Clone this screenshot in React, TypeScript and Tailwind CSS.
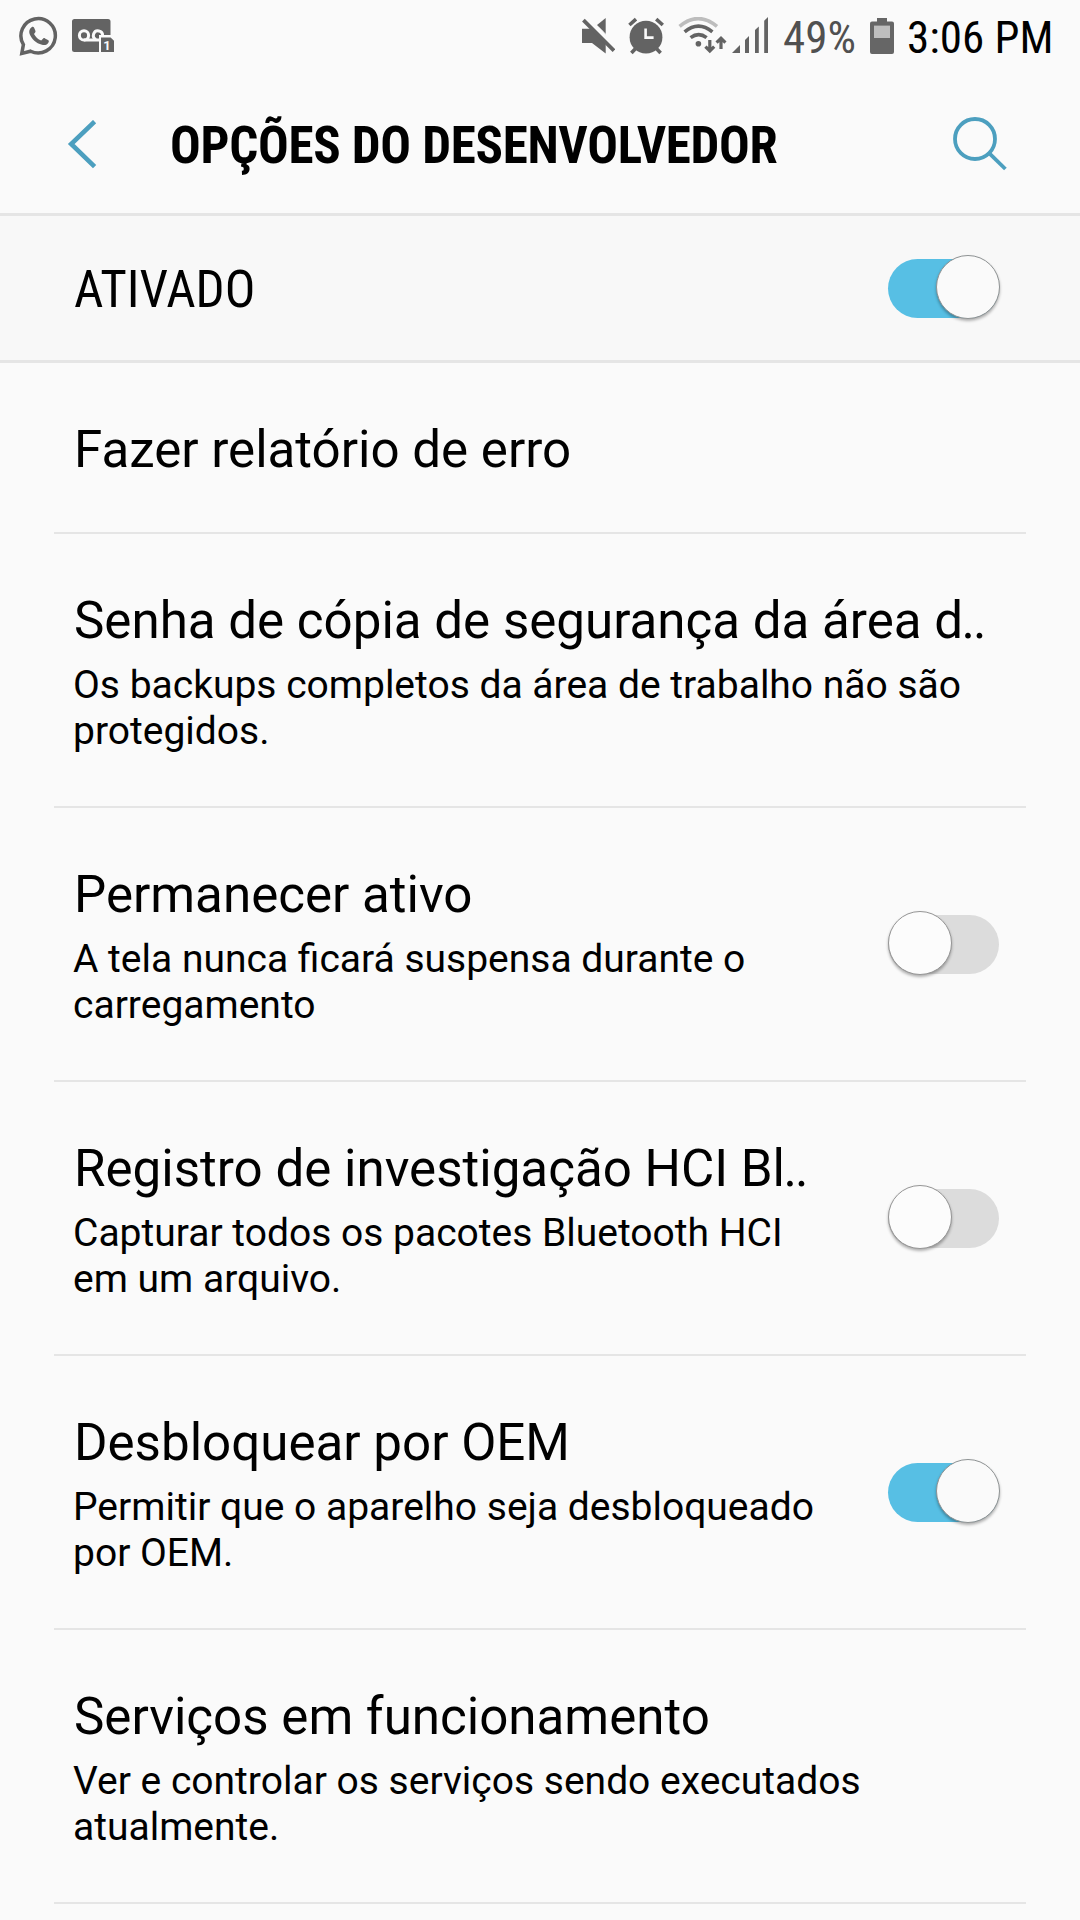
import React from "react";

function WhatsAppIcon() {
  return (
    <svg width="40" height="40" viewBox="19 16 40 40" fill="none">
      <path d="M23.4 44.6 A17.2 17.2 0 1 1 30.6 51.2 L21.8 53.4 Z" stroke="#636363" strokeWidth="3.5" strokeLinejoin="miter" />
      <path
        d="M31.6 27.2 C32.6 26.4 33.6 26.6 34 27.6 L35.4 30.8 C35.8 31.8 35.2 32.6 34 34 C35.6 37 38 39.2 41.2 40.6 L43.2 38.6 C43.8 38 44.4 38 45 38.4 L48 40 C49 40.6 49 41.2 48.6 42.2 C47.6 44.8 44.6 45.4 42 44.8 C36 43.2 31.6 39 29.6 34 C28.6 31.2 29.6 28.6 31.6 27.2 Z"
        fill="#636363"
      />
    </svg>
  );
}

function VoicemailIcon() {
  return (
    <svg width="44" height="36" viewBox="71 18 44 36" fill="none">
      <path d="M74.5 19 H108 Q110.5 19 110.5 21.5 V35 H99 V52 H74.5 Q72 52 72 49.5 V21.5 Q72 19 74.5 19 Z" fill="#636363" />
      <g stroke="#fafafa" strokeWidth="3">
        <circle cx="84" cy="35.4" r="4.6" />
        <path d="M96 39.6 A4.6 4.6 0 1 1 102.6 35.6" />
        <path d="M84 40 H99.4" />
      </g>
      <path d="M101 37.4 H110.6 L114 40.8 V52 H101 Z" fill="#636363" />
      <text x="107" y="49.6" textAnchor="middle" fontSize="13" fontWeight="700" fill="#fafafa" fontFamily="Roboto, sans-serif">1</text>
    </svg>
  );
}

function MuteIcon() {
  return (
    <svg width="34" height="38" viewBox="581 17 34 38">
      <path d="M582 28.8 H592 L605.7 18 V53.6 L592 43 H582 Z" fill="#636363" />
      <path d="M586 17.4 L616 48.4" stroke="#fafafa" strokeWidth="5" />
      <path d="M592 17 L606 17 L606 34 L594 24 Z" fill="#fafafa" />
      <path d="M605.7 18 V33.4 L597 25 Z" fill="#636363" />
      <path d="M583.4 20.2 L614 50.6" stroke="#636363" strokeWidth="3.8" />
    </svg>
  );
}

function AlarmIcon() {
  return (
    <svg width="36" height="38" viewBox="628 17 36 38" fill="none">
      <circle cx="646" cy="37.2" r="16.4" fill="#636363" />
      <g stroke="#636363" strokeWidth="3.6">
        <path d="M629.4 25 L636 19.2 M662.8 25 L656.2 19.2" />
        <path d="M631.4 53 L637 47 M660.6 53 L655 47" />
      </g>
      <path d="M645.6 28.6 V37.6 H653.6" stroke="#fafafa" strokeWidth="2.6" />
    </svg>
  );
}

function WifiIcon() {
  return (
    <svg width="49" height="38" viewBox="678 17 49 38" fill="none">
      <path d="M679.6 26.4 Q698 10.8 717 26.4" stroke="#bdbdbd" strokeWidth="3.6" />
      <path d="M684.6 31.8 Q698.4 20.6 712.4 31.8" stroke="#636363" strokeWidth="3.6" />
      <path d="M690.6 37.6 Q698.6 31.6 706.6 37.6" stroke="#636363" strokeWidth="3.6" />
      <circle cx="698.4" cy="43.8" r="2.8" fill="#636363" />
      <g stroke="#636363" strokeWidth="3.2">
        <path d="M709.8 40 V50.4 M705.4 46.6 L709.8 51 L714.2 46.6" />
        <path d="M721 49 V38.6 M716.6 42.6 L721 38.2 L725.4 42.6" />
      </g>
    </svg>
  );
}

function SignalIcon() {
  return (
    <svg width="37" height="37" viewBox="732 17 37 37" fill="#636363">
      <path d="M732 53 L740 45 V53 Z" />
      <path d="M745 53 V40 L749 36 V53 Z" />
      <path d="M755 53 V30 L758.8 26.4 V53 Z" />
      <path d="M764.2 53 V20.8 L768 17 V53 Z" />
    </svg>
  );
}

function BatteryIcon() {
  return (
    <svg width="24" height="36" viewBox="870 18 24 36">
      <path d="M877 18 H887 V21.6 H892 Q894 21.6 894 23.6 V52 Q894 54 892 54 H872 Q870 54 870 52 V23.6 Q870 21.6 872 21.6 H877 Z" fill="#666" />
      <path d="M874 25.6 H890 V38 H874 Z" fill="#bebebe" />
    </svg>
  );
}

function StatusBar() {
  return (
    <div className="flex h-[72px] items-start">
      <div className="ml-[19px] mt-4"><WhatsAppIcon /></div>
      <div className="ml-3 mt-[18px]"><VoicemailIcon /></div>
      <div className="ml-[466px] mt-[17px]"><MuteIcon /></div>
      <div className="ml-[13px] mt-[17px]"><AlarmIcon /></div>
      <div className="ml-[14px] mt-[17px]"><WifiIcon /></div>
      <div className="ml-[5px] mt-[17px]"><SignalIcon /></div>
      <div className="ml-[14px] mt-[11px] w-[87px] whitespace-nowrap text-[45px] leading-[53px] text-[#505050] [font-stretch:75%]">49%</div>
      <div className="mt-[18px]"><BatteryIcon /></div>
      <div className="ml-[13px] mt-[11px] whitespace-nowrap text-[45px] leading-[53px] [font-stretch:75%]">3:06 PM</div>
    </div>
  );
}

function Toggle({ on = false }: { on?: boolean }) {
  return (
    <div className={on ? "relative h-[59px] w-[111px] rounded-full bg-[#57bfe4]" : "relative h-[59px] w-[111px] rounded-full bg-[#dcdcdc]"}>
      <div
        className={
          on
            ? "absolute -top-1 left-[48px] size-[64px] rounded-full border border-[#8f9394] bg-[#fafafa] shadow-[0_2px_3px_rgba(0,0,0,0.3)]"
            : "absolute -top-1 left-0 size-[64px] rounded-full border border-[#969696] bg-[#fcfcfc] shadow-[0_2px_3px_rgba(0,0,0,0.3)]"
        }
      />
    </div>
  );
}

interface Setting {
  title: string;
  truncated?: boolean;
  lines?: string[];
  on?: boolean;
}

const settings: Setting[] = [
  { title: "Fazer relatório de erro" },
  { title: "Senha de cópia de segurança da área d", truncated: true, lines: ["Os backups completos da área de trabalho não são", "protegidos."] },
  { title: "Permanecer ativo", lines: ["A tela nunca ficará suspensa durante o", "carregamento"], on: false },
  { title: "Registro de investigação HCI Bl", truncated: true, lines: ["Capturar todos os pacotes Bluetooth HCI", "em um arquivo."], on: false },
  { title: "Desbloquear por OEM", lines: ["Permitir que o aparelho seja desbloqueado", "por OEM."], on: true },
  { title: "Serviços em funcionamento", lines: ["Ver e controlar os serviços sendo executados", "atualmente."] },
];

function SettingRow({ title, truncated, lines, on }: Setting) {
  return (
    <div className={lines ? "mx-[54px] flex h-[274px] border-b-2 border-[#e5e5e5]" : "mx-[54px] flex h-[171px] border-b-2 border-[#e5e5e5]"}>
      <div className="flex-1 whitespace-nowrap pl-5 pt-14">
        <div className="text-[51.1px] leading-[61px]">
          {title}
          {truncated && <span className="-ml-[1.6px] tracking-[-1.8px]">..</span>}
        </div>
        {lines && (
          <div className="-ml-px mt-[11px] text-[39px] leading-[46px]">
            {lines.map((line) => (
              <div key={line}>{line}</div>
            ))}
          </div>
        )}
      </div>
      {on !== undefined && (
        <div className="mr-[27px] mt-[107px]">
          <Toggle on={on} />
        </div>
      )}
    </div>
  );
}

export default function App() {
  return (
    <div className="h-[1920px] w-[1080px] overflow-hidden bg-[#fafafa] font-['Roboto',sans-serif] text-black">
      <StatusBar />
      <header className="flex h-[144px] items-start border-b-[3px] border-[#e5e5e5]">
        <svg className="ml-[67px] mt-12" width="30" height="49" viewBox="67 120 30 49" fill="none">
          <path d="M94.6 121.6 L71.2 144 L94.6 166.6" stroke="#4c9fbf" strokeWidth="4.6" />
        </svg>
        <h1 className="ml-[73px] mt-[43px] w-[783px] whitespace-nowrap text-[51px] font-bold leading-[61px] tracking-[-0.3px] [font-stretch:75%]">OPÇÕES DO DESENVOLVEDOR</h1>
        <svg className="mt-[44px] shrink-0" width="56" height="56" viewBox="953 116 56 56" fill="none" stroke="#4c9fbf">
          <circle cx="975" cy="139" r="20" strokeWidth="3.8" />
          <path d="M989.4 153.4 L1005.4 169" strokeWidth="3.8" />
        </svg>
      </header>
      <div className="flex h-[147px] items-start border-b-[3px] border-[#e5e5e5] bg-[#f8f8f8]">
        <div className="ml-[74px] mt-[43px] flex-1 text-[51px] leading-[61px] [font-stretch:75%]">ATIVADO</div>
        <div className="mr-[81px] mt-[43px]"><Toggle on /></div>
      </div>
      <main>
        {settings.map((setting) => (
          <SettingRow key={setting.title} {...setting} />
        ))}
      </main>
    </div>
  );
}
